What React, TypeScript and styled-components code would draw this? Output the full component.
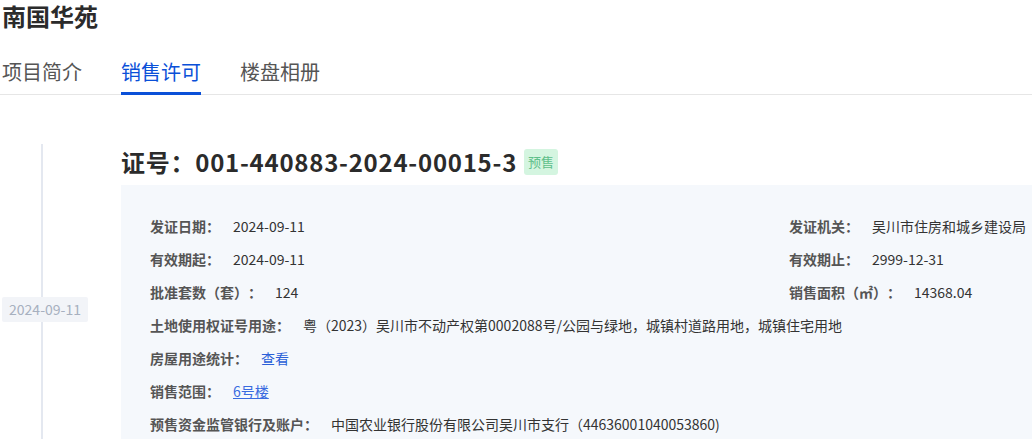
import styled, { createGlobalStyle } from 'styled-components';

const GlobalStyle = createGlobalStyle`
  html, body {
    margin: 0;
    padding: 0;
    background: #fff;
    font-family: "Noto Sans CJK SC", "Noto Sans", sans-serif;
    color: #333;
    text-spacing-trim: space-all;
    overflow-x: hidden;
  }
`;

const Page = styled.div`
  width: 1160px;
  padding-left: 2px;
`;

const Title = styled.h1`
  margin: 0;
  font-size: 24px;
  line-height: 32px;
  font-weight: 700;
  color: #2b2b2b;
`;

const Tabs = styled.div`
  display: flex;
  gap: 39px;
  margin-top: 26px;
  margin-left: -2px;
  padding-left: 2px;
  border-bottom: 1px solid #e6e6e6;
`;

type TabProps = { $active?: boolean };

const Tab = styled.div<TabProps>`
  font-size: 20px;
  line-height: 28px;
  padding-bottom: 6px;
  color: ${(p) => (p.$active ? '#0a50d8' : '#555')};
  border-bottom: 3px solid ${(p) => (p.$active ? '#0a50d8' : 'transparent')};
  margin-bottom: -1px;
`;

const Timeline = styled.div`
  display: flex;
  margin-top: 49px;
`;

const Rail = styled.div`
  position: relative;
  width: 119px;
  flex-shrink: 0;
  padding-top: 153px;
  &::before {
    content: '';
    position: absolute;
    left: 39px;
    top: 0;
    bottom: 0;
    width: 2px;
    background: #e4e8f0;
  }
`;

const DateBadge = styled.div`
  position: relative;
  width: 86px;
  height: 25px;
  line-height: 25px;
  text-align: center;
  font-size: 14px;
  color: #a7b0bf;
  background: #f2f4f8;
  border-radius: 2px;
`;

const Body = styled.div`
  flex: 1;
  padding-top: 5px;
`;

const CertHead = styled.div`
  display: flex;
  align-items: center;
  gap: 7px;
  height: 26px;
`;

const CertTitle = styled.h2`
  margin: 0;
  font-size: 24px;
  line-height: 26px;
  font-weight: 700;
  letter-spacing: 0.75px;
  color: #2b2b2b;
`;

const Tag = styled.span`
  font-size: 13px;
  line-height: 26px;
  padding: 0 4px;
  border-radius: 3px;
  background: #d4f5e0;
  color: #5fbf8a;
`;

const Panel = styled.div`
  margin-top: 10px;
  background: #f5f8fc;
  padding: 24px 0 10px 29px;
  display: grid;
  grid-template-columns: 639px 1fr;
  grid-auto-rows: 33px;
`;

type RowProps = { $wide?: boolean };

const Row = styled.div<RowProps>`
  display: flex;
  align-items: center;
  font-size: 14px;
  white-space: nowrap;
  grid-column: ${(p) => (p.$wide ? '1 / -1' : 'auto')};
`;

const Label = styled.span`
  font-weight: 700;
  color: #555;
`;

const Value = styled.span`
  margin-left: 13px;
  color: #333;
`;

type LinkProps = { $underline?: boolean };

const LinkValue = styled.a<LinkProps>`
  margin-left: 13px;
  color: ${(p) => (p.$underline ? '#3a6be0' : '#2a5fd8')};
  text-decoration: ${(p) => (p.$underline ? 'underline' : 'none')};
  cursor: pointer;
`;

const App = () => {
  return (
    <Page>
      <GlobalStyle />
      <Title>南国华苑</Title>
      <Tabs>
        <Tab>项目简介</Tab>
        <Tab $active>销售许可</Tab>
        <Tab>楼盘相册</Tab>
      </Tabs>
      <Timeline>
        <Rail>
          <DateBadge>2024-09-11</DateBadge>
        </Rail>
        <Body>
          <CertHead>
            <CertTitle>证号：001-440883-2024-00015-3</CertTitle>
            <Tag>预售</Tag>
          </CertHead>
          <Panel>
            <Row>
              <Label>发证日期：</Label>
              <Value>2024-09-11</Value>
            </Row>
            <Row>
              <Label>发证机关：</Label>
              <Value>吴川市住房和城乡建设局</Value>
            </Row>
            <Row>
              <Label>有效期起：</Label>
              <Value>2024-09-11</Value>
            </Row>
            <Row>
              <Label>有效期止：</Label>
              <Value>2999-12-31</Value>
            </Row>
            <Row>
              <Label>批准套数（套）：</Label>
              <Value>124</Value>
            </Row>
            <Row>
              <Label>销售面积（㎡）：</Label>
              <Value>14368.04</Value>
            </Row>
            <Row $wide>
              <Label>土地使用权证号用途：</Label>
              <Value>粤（2023）吴川市不动产权第0002088号/公园与绿地，城镇村道路用地，城镇住宅用地</Value>
            </Row>
            <Row $wide>
              <Label>房屋用途统计：</Label>
              <LinkValue>查看</LinkValue>
            </Row>
            <Row $wide>
              <Label>销售范围：</Label>
              <LinkValue $underline>6号楼</LinkValue>
            </Row>
            <Row $wide>
              <Label>预售资金监管银行及账户：</Label>
              <Value>中国农业银行股份有限公司吴川市支行（44636001040053860)</Value>
            </Row>
          </Panel>
        </Body>
      </Timeline>
    </Page>
  );
};

export default App;
